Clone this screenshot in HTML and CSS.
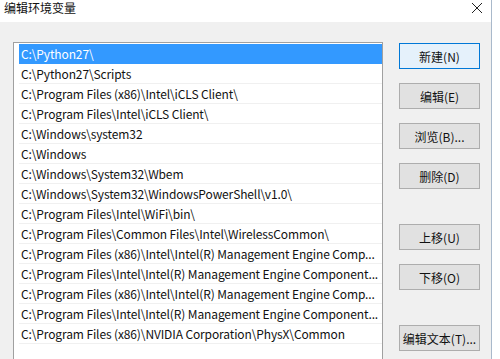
FILE: index.html
```html
<!DOCTYPE html>
<html>
<head>
<meta charset="utf-8">
<link rel="stylesheet" href="styles.css">
</head>
<body>
<div class="window">
  <div class="titlebar">
    <span class="title">编辑环境变量</span>
    <svg class="close" width="12" height="12" viewBox="0 0 12 12"><path d="M1 1 L11 11 M11 1 L1 11" stroke="#222" stroke-width="1" fill="none"/></svg>
  </div>
  <div class="content">
    <div class="list">
      <div class="item selected">C:\Python27\</div>
      <div class="item">C:\Python27\Scripts</div>
      <div class="item">C:\Program Files (x86)\Intel\iCLS Client\</div>
      <div class="item">C:\Program Files\Intel\iCLS Client\</div>
      <div class="item">C:\Windows\system32</div>
      <div class="item">C:\Windows</div>
      <div class="item">C:\Windows\System32\Wbem</div>
      <div class="item">C:\Windows\System32\WindowsPowerShell\v1.0\</div>
      <div class="item">C:\Program Files\Intel\WiFi\bin\</div>
      <div class="item">C:\Program Files\Common Files\Intel\WirelessCommon\</div>
      <div class="item">C:\Program Files (x86)\Intel\Intel(R) Management Engine Comp...</div>
      <div class="item">C:\Program Files\Intel\Intel(R) Management Engine Component...</div>
      <div class="item">C:\Program Files (x86)\Intel\Intel(R) Management Engine Comp...</div>
      <div class="item">C:\Program Files\Intel\Intel(R) Management Engine Component...</div>
      <div class="item">C:\Program Files (x86)\NVIDIA Corporation\PhysX\Common</div>
    </div>
    <div class="buttons">
      <div class="btn default">新建(N)</div>
      <div class="btn">编辑(E)</div>
      <div class="btn">浏览(B)...</div>
      <div class="btn">删除(D)</div>
      <div class="btn sep">上移(U)</div>
      <div class="btn">下移(O)</div>
      <div class="btn sep">编辑文本(T)...</div>
    </div>
  </div>
</div>
</body>
</html>
```

FILE: styles.css
```css
html, body {
  margin: 0;
  padding: 0;
  background: #ffffff;
  overflow: hidden;
}
body {
  font-family: "Noto Sans CJK SC", "Noto Sans", sans-serif;
  font-size: 12px;
  color: #000;
}
.window {
  width: 491px;
  height: 359px;
  border-right: 1px solid #a9b9cb;
  display: flex;
  flex-direction: column;
  background: #f0f0f0;
  overflow: hidden;
}
.titlebar {
  height: 22px;
  background: #ffffff;
  display: flex;
  align-items: flex-start;
  justify-content: space-between;
  flex: none;
}
.title {
  font-size: 12px;
  line-height: 14px;
  margin-left: 4px;
  margin-top: 1px;
  color: #111;
}
.close {
  margin-top: 2px;
  margin-right: 8px;
}
.content {
  flex: 1;
  min-height: 0;
  display: flex;
  gap: 16px;
  padding: 20px 0 0 13px;
}
.list {
  width: 370px;
  height: 317px;
  background: #fff;
  border: 1px solid #a0a0a0;
  border-bottom: none;
  padding: 1px 0 0 5px;
  box-sizing: border-box;
  flex: none;
}
.item {
  height: 19px;
  line-height: 19px;
  border-bottom: 1px solid #f0f0f0;
  padding-left: 2px;
  white-space: nowrap;
  overflow: hidden;
  color: #111;
  letter-spacing: -0.12px;
}
.item.selected {
  background: #3399ff;
  color: #fff;
  border-bottom-color: #3399ff;
}
.buttons {
  display: flex;
  flex-direction: column;
  gap: 14px;
  padding-top: 1px;
  width: 81px;
}
.btn {
  height: 26px;
  box-sizing: border-box;
  border: 1px solid #adadad;
  background: #e1e1e1;
  display: flex;
  align-items: center;
  justify-content: center;
  font-size: 12px;
  color: #111;
}
.btn.default {
  border-color: #0078d7;
  background: #e5f1fb;
}
.btn.sep {
  margin-top: 21px;
}
```
